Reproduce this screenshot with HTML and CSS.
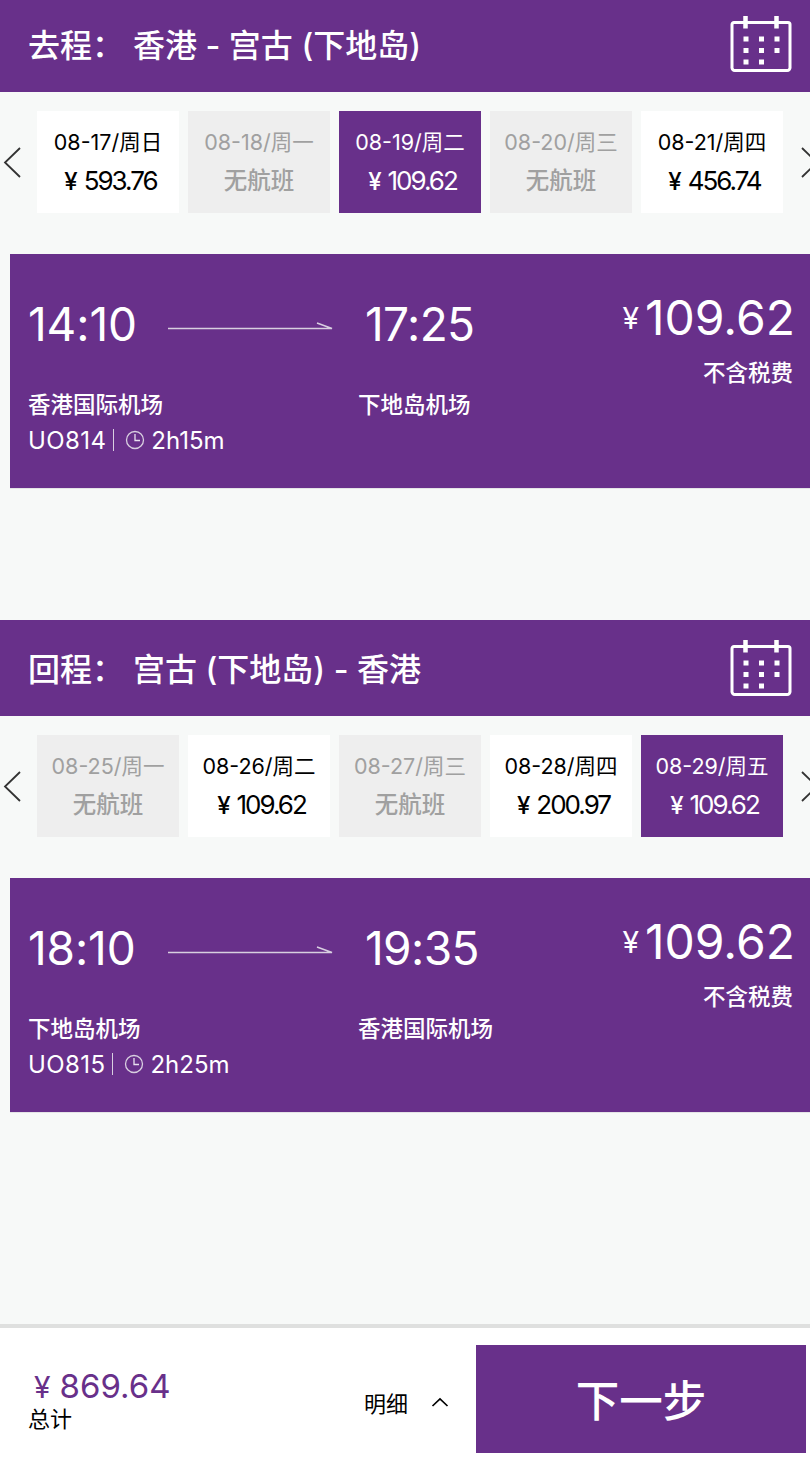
FILE: index.html
```html
<!DOCTYPE html>
<html lang="zh-CN">
<head>
<meta charset="utf-8">
<title>选择航班</title>
<link rel="stylesheet" href="styles.css">
</head>
<body>
<main class="page">
  <section class="leg leg-out">
    <header class="leg-head head-out">
      <h2 class="leg-title"><span class="leg-label">去程：</span><span>香港 - 宫古 (下地岛)</span></h2>
      <svg class="cal" viewBox="0 0 64 56" width="64" height="56"><path d="M5 6.500h54a2 2 0 0 1 2 2V51a3 3 0 0 1-3 3.500H6A3 3 0 0 1 3 51V8.500a2 2 0 0 1 2-2z" fill="none" stroke="#fff" stroke-width="3"/><path d="M16.500 0v12.500M47.500 0v12.500" stroke="#fff" stroke-width="4.500" fill="none"/><g fill="#fff"><rect x="14.500" y="20.500" width="5" height="5"/><rect x="30" y="20.500" width="5" height="5"/><rect x="45.500" y="20.500" width="5" height="5"/><rect x="14.500" y="32" width="5" height="5"/><rect x="30" y="32" width="5" height="5"/><rect x="45.500" y="32" width="5" height="5"/><rect x="14.500" y="43.500" width="5" height="5"/><rect x="30" y="43.500" width="5" height="5"/></g></svg>
    </header>
    <div class="dates">
      <svg class="chev" viewBox="0 0 18 32" width="18" height="32"><path d="M17 2 2 16.500 17 31" fill="none" stroke="#333" stroke-width="1.800"/></svg>
      <div class="tab"><div class="tab-date">08-17/周日</div><div class="tab-price"><span class="yen">¥</span>593.76</div></div>
      <div class="tab off"><div class="tab-date">08-18/周一</div><div class="tab-none">无航班</div></div>
      <div class="tab on"><div class="tab-date">08-19/周二</div><div class="tab-price"><span class="yen">¥</span>109.62</div></div>
      <div class="tab off"><div class="tab-date">08-20/周三</div><div class="tab-none">无航班</div></div>
      <div class="tab"><div class="tab-date">08-21/周四</div><div class="tab-price"><span class="yen">¥</span>456.74</div></div>
      <svg class="chev chev-next" viewBox="0 0 18 32" width="18" height="32"><path d="M2 2l15 14.500L2 31" fill="none" stroke="#333" stroke-width="1.800"/></svg>
    </div>
    <article class="flight">
      <div class="route">
        <div class="times">
          <span class="time time-a">14:10</span>
          <svg class="arrow" viewBox="0 0 165 10" width="165" height="10"><path d="M0 8.500h164L149 3" fill="none" stroke="#d8cfe0" stroke-width="1.500"/></svg>
          <span class="time">17:25</span>
        </div>
        <div class="airports"><span class="airport">香港国际机场</span><span class="airport">下地岛机场</span></div>
        <div class="meta">
          <span class="flight-no">UO814</span><i class="sep"></i>
          <svg class="clock" viewBox="0 0 20 20" width="20" height="20"><circle cx="10" cy="10" r="8.500" fill="none" stroke="#d8cfe0" stroke-width="1.300"/><path d="M10 4v6.500h5" fill="none" stroke="#e8e0ee" stroke-width="1.300"/></svg>
          <span>2h15m</span>
        </div>
      </div>
      <div class="fare">
        <div class="fare-price"><span class="fare-yen">¥</span>109.62</div>
        <div class="fare-note">不含税费</div>
      </div>
    </article>
  </section>

  <section class="leg leg-back">
    <header class="leg-head head-back">
      <h2 class="leg-title"><span class="leg-label">回程：</span><span>宫古 (下地岛) - 香港</span></h2>
      <svg class="cal" viewBox="0 0 64 56" width="64" height="56"><path d="M5 6.500h54a2 2 0 0 1 2 2V51a3 3 0 0 1-3 3.500H6A3 3 0 0 1 3 51V8.500a2 2 0 0 1 2-2z" fill="none" stroke="#fff" stroke-width="3"/><path d="M16.500 0v12.500M47.500 0v12.500" stroke="#fff" stroke-width="4.500" fill="none"/><g fill="#fff"><rect x="14.500" y="20.500" width="5" height="5"/><rect x="30" y="20.500" width="5" height="5"/><rect x="45.500" y="20.500" width="5" height="5"/><rect x="14.500" y="32" width="5" height="5"/><rect x="30" y="32" width="5" height="5"/><rect x="45.500" y="32" width="5" height="5"/><rect x="14.500" y="43.500" width="5" height="5"/><rect x="30" y="43.500" width="5" height="5"/></g></svg>
    </header>
    <div class="dates">
      <svg class="chev" viewBox="0 0 18 32" width="18" height="32"><path d="M17 2 2 16.500 17 31" fill="none" stroke="#333" stroke-width="1.800"/></svg>
      <div class="tab off"><div class="tab-date">08-25/周一</div><div class="tab-none">无航班</div></div>
      <div class="tab"><div class="tab-date">08-26/周二</div><div class="tab-price"><span class="yen">¥</span>109.62</div></div>
      <div class="tab off"><div class="tab-date">08-27/周三</div><div class="tab-none">无航班</div></div>
      <div class="tab"><div class="tab-date">08-28/周四</div><div class="tab-price"><span class="yen">¥</span>200.97</div></div>
      <div class="tab on"><div class="tab-date">08-29/周五</div><div class="tab-price"><span class="yen">¥</span>109.62</div></div>
      <svg class="chev chev-next" viewBox="0 0 18 32" width="18" height="32"><path d="M2 2l15 14.500L2 31" fill="none" stroke="#333" stroke-width="1.800"/></svg>
    </div>
    <article class="flight">
      <div class="route">
        <div class="times">
          <span class="time time-a">18:10</span>
          <svg class="arrow" viewBox="0 0 165 10" width="165" height="10"><path d="M0 8.500h164L149 3" fill="none" stroke="#d8cfe0" stroke-width="1.500"/></svg>
          <span class="time">19:35</span>
        </div>
        <div class="airports"><span class="airport">下地岛机场</span><span class="airport">香港国际机场</span></div>
        <div class="meta">
          <span class="flight-no">UO815</span><i class="sep"></i>
          <svg class="clock" viewBox="0 0 20 20" width="20" height="20"><circle cx="10" cy="10" r="8.500" fill="none" stroke="#d8cfe0" stroke-width="1.300"/><path d="M10 4v6.500h5" fill="none" stroke="#e8e0ee" stroke-width="1.300"/></svg>
          <span>2h25m</span>
        </div>
      </div>
      <div class="fare">
        <div class="fare-price"><span class="fare-yen">¥</span>109.62</div>
        <div class="fare-note">不含税费</div>
      </div>
    </article>
  </section>

  <footer class="bar">
    <div class="total">
      <div class="total-price"><span class="total-yen">¥</span>869.64</div>
      <div class="total-label">总计</div>
    </div>
    <div class="detail"><span>明细</span><svg class="caret" viewBox="0 0 18 10" width="18" height="10"><path d="M1.500 9 9 2l7.500 7" fill="none" stroke="#000" stroke-width="1.700"/></svg></div>
    <button class="next" type="button">下一步</button>
  </footer>
</main>
</body>
</html>
```
FILE: styles.css
```css
* { box-sizing: border-box; }
html, body { margin: 0; padding: 0; }
body {
  width: 810px;
  height: 1462px;
  overflow: hidden;
  background: #f7f9f8;
  font-family: Inter, "Noto Sans CJK SC", sans-serif;
  color: #000;
}
.page { display: flex; flex-direction: column; height: 1462px; }
.leg-out { height: 620px; }
.leg-back { height: 704px; }
.leg-head {
  display: flex;
  align-items: center;
  justify-content: space-between;
  padding: 0 17px 0 28px;
  background: #68308a;
  color: #fff;
}
.head-out { height: 92px; padding-bottom: 6px; }
.head-back { height: 96px; padding-bottom: 2px; }
.leg-title { margin: 0; font-size: 32px; font-weight: 500; display: flex; }
.leg-label { width: 105px; }
.cal { display: block; flex: none; }
.head-out .cal { margin-top: 2px; }
.head-back .cal { margin-top: 2px; }
.dates {
  display: flex;
  align-items: center;
  gap: 9px;
  margin-top: 19px;
  padding-left: 37px;
  position: relative;
  overflow: hidden;
  height: 102px;
}
.chev { position: absolute; left: 3px; top: 35px; }
.chev-next { left: 800px; }
.tab {
  flex: none;
  width: 142px;
  height: 102px;
  background: #fff;
  text-align: center;
  color: #000;
}
.tab.off { background: #eeeeee; color: #a0a0a0; }
.tab.on { background: #68308a; color: #fff; }
.tab-date { font-size: 21.500px; line-height: 26px; padding-top: 18px; }
.tab-price { font-size: 26px; line-height: 32px; margin-top: 10px; padding-left: 5px; letter-spacing: -2px; }
.tab-none { font-size: 23.500px; font-weight: 500; line-height: 32px; margin-top: 10px; }
.yen { font-size: 24px; margin-right: 6px; letter-spacing: 0; font-weight: 500; }
.flight {
  display: flex;
  justify-content: space-between;
  height: 235px;
  margin: 41px 0 0 10px;
  padding: 0 15px 0 18px;
  background: #68308a;
  color: #fff;
  border-bottom: 1px solid #e4e4e6;
}
.route { padding-top: 40px; }
.times { display: flex; align-items: center; height: 60px; }
.time { font-size: 46px; line-height: 60px; letter-spacing: -0.600px; }
.time-a { width: 140px; letter-spacing: -0.100px; }
.arrow { display: block; margin-right: 32px; margin-top: 2px; }
.airports { display: flex; margin-top: 36px; height: 30px; align-items: center; }
.airport { font-size: 22.500px; font-weight: 500; line-height: 30px; }
.airport:first-child { width: 330px; }
.meta { display: flex; align-items: center; font-size: 24px; height: 30px; margin-top: 5px; }
.flight-no { letter-spacing: 0.400px; }
.sep { width: 1px; height: 22px; background: #d8cfe0; margin: 0 11px 0 7px; }
.clock { margin-right: 6px; }
.fare { text-align: right; padding-top: 30px; }
.fare-price { font-size: 48px; line-height: 68px; }
.fare-yen { font-size: 30px; margin-right: 6px; vertical-align: 6px; }
.fare-note { font-size: 22.500px; font-weight: 500; line-height: 30px; margin-top: 6px; padding-right: 2px; }
.bar {
  display: flex;
  align-items: center;
  height: 138px;
  background: #fff;
  border-top: 4px solid #dfe0df;
  padding: 8px 4px 0 28px;
}
.total { width: 336px; margin-top: 2px; }
.total-price { font-size: 33px; line-height: 38px; color: #68308a; padding: 1px 0 0 6px; }
.total-yen { font-size: 30px; margin-right: 9px; vertical-align: 0; }
.total-label { font-size: 22px; line-height: 30px; margin-top: -2px; }
.detail { display: flex; align-items: center; width: 112px; font-size: 22px; margin-top: 5px; }
.caret { margin-left: 23px; }
.next {
  flex: none;
  width: 330px;
  height: 108px;
  border: 0;
  padding: 0 0 2px;
  background: #68308a;
  color: #fff;
  font-family: inherit;
  font-size: 43.500px;
  font-weight: 500;
}
```
